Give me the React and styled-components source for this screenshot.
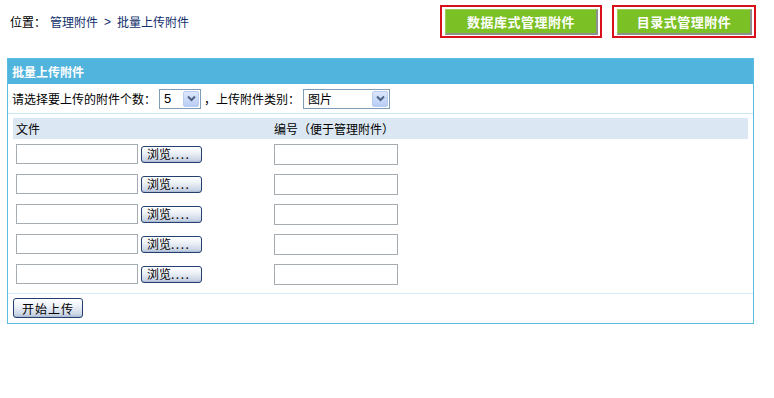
import React from "react";
import styled, { createGlobalStyle } from "styled-components";

const Global = createGlobalStyle`
  html, body { margin: 0; padding: 0; background: #fff; }
  body { font-family: "SimSun", "Noto Sans CJK SC", "Liberation Sans", sans-serif; font-size: 12px; color: #000; }
  * { box-sizing: border-box; }
`;

const Page = styled.div`
  width: 774px;
  height: 398px;
  background: #fff;
`;

const TopBar = styled.div`
  display: flex;
  align-items: center;
  justify-content: space-between;
  height: 38px;
  padding: 5px 18px 0 10px;
`;

const Crumb = styled.div`
  display: flex;
  align-items: center;
  font-size: 12px;
  line-height: 14px;
  color: #000;
  margin-top: 1px;
`;

const CrumbLabel = styled.span`
  margin-right: 4px;
`;

const CrumbLink = styled.a`
  color: #10306b;
  text-decoration: none;
`;

const CrumbSep = styled.span`
  color: #10306b;
  font-family: "Liberation Sans", sans-serif;
  padding: 0 6px 0 6px;
`;

const ActionGroup = styled.div`
  display: flex;
  gap: 10px;
`;

const RedFrame = styled.div`
  border: 2px solid #d7101a;
  padding: 2px 2px 1px 3px;
  width: ${(p) => p.$w}px;
  height: 33px;
  display: flex;
`;

const GreenButton = styled.button`
  flex: 1;
  background: #7bc024;
  border: 1px solid #9ccf5e;
  border-right: 2px solid #8f8f8f;
  border-bottom: 2px solid #8f8f8f;
  color: #fff;
  font-weight: bold;
  font-size: 13px;
  font-family: "Noto Sans CJK SC", sans-serif;
  letter-spacing: 0.5px;
  padding: 0;
  cursor: pointer;
`;

const Panel = styled.div`
  margin: 20px 0 0 7px;
  width: 747px;
  border: 1px solid #5bbbe0;
`;

const PanelHeader = styled.div`
  height: 25px;
  background: #51b4dd;
  color: #fff;
  font-weight: bold;
  font-size: 12px;
  line-height: 25px;
  padding-left: 4px;
  font-family: "Noto Sans CJK SC", sans-serif;
`;

const SelectRow = styled.div`
  display: flex;
  align-items: center;
  height: 30px;
  padding-left: 4px;
  border-bottom: 1px solid #c9e7f4;
  font-size: 12px;
`;

const FakeSelect = styled.div`
  display: flex;
  align-items: center;
  justify-content: space-between;
  width: ${(p) => p.$w}px;
  height: 20px;
  border: 1px solid #7f9db9;
  margin: 0 ${(p) => p.$mr || 0}px 0 ${(p) => p.$ml || 0}px;
  padding: 0 1px 0 4px;
  background: #fff;
  font-size: 13px;
  font-family: "Liberation Sans", "Noto Sans CJK SC", sans-serif;
`;

const SelectText = styled.span`
  font-family: "Noto Sans CJK SC", sans-serif;
  font-size: 12px;
`;

const ArrowBox = styled.span`
  width: 16px;
  height: 16px;
  border: 1px solid #b9cbf0;
  border-radius: 2px;
  background: linear-gradient(#dde7fb, #b8cdf5);
  display: flex;
  align-items: center;
  justify-content: center;
`;

const Table = styled.div`
  padding: 4px 5px 4px 5px;
  border-bottom: 1px solid #d4eef8;
`;

const Grid = styled.div`
  display: grid;
  grid-template-columns: 258px 1fr;
`;

const HeadCell = styled.div`
  background: #dbe8f4;
  height: 21px;
  line-height: 21px;
  padding-left: 3px;
  font-size: 12px;
`;

const Cell = styled.div`
  height: 30px;
  display: flex;
  align-items: center;
  padding-left: 3px;
  gap: 3px;
`;

const TextBox = styled.input`
  width: ${(p) => p.$w}px;
  height: ${(p) => p.$h}px;
  border: 1px solid #a5acb2;
  padding: 0 2px;
  margin: 0;
  background: #fff;
`;

const XPButton = styled.button`
  width: ${(p) => p.$w}px;
  height: ${(p) => p.$h}px;
  padding: 0 0 0 ${(p) => p.$pl || 0}px;
  margin: 0;
  border: 1px solid #24406e;
  border-radius: 3px;
  background: linear-gradient(#ffffff 0%, #edf1f7 40%, #ccd6e6 85%, #a9b8d1 100%);
  font-size: 12px;
  font-family: "Noto Sans CJK SC", sans-serif;
  color: #000;
  text-align: ${(p) => p.$align || "center"};
  line-height: ${(p) => p.$h - 3}px;
  letter-spacing: ${(p) => p.$ls || 0}px;
  cursor: pointer;
`;

const Dots = styled.span`
  letter-spacing: 1.5px;
`;

const Footer = styled.div`
  padding: 4px 5px 5px 5px;
  display: flex;
`;

const Chevron = () => (
  <svg width="9" height="7" viewBox="0 0 9 7">
    <path d="M1 1.5 L4.5 5 L8 1.5" fill="none" stroke="#4d6185" strokeWidth="2" />
  </svg>
);

export default function App() {
  const rows = [0, 1, 2, 3, 4];
  return (
    <Page>
      <Global />
      <TopBar>
        <Crumb>
          <CrumbLabel>位置：</CrumbLabel>
          <CrumbLink href="#">管理附件</CrumbLink>
          <CrumbSep>&gt;</CrumbSep>
          <CrumbLink href="#">批量上传附件</CrumbLink>
        </Crumb>
        <ActionGroup>
          <RedFrame $w={162}>
            <GreenButton>数据库式管理附件</GreenButton>
          </RedFrame>
          <RedFrame $w={144}>
            <GreenButton>目录式管理附件</GreenButton>
          </RedFrame>
        </ActionGroup>
      </TopBar>
      <Panel>
        <PanelHeader>批量上传附件</PanelHeader>
        <SelectRow>
          请选择要上传的附件个数：
          <FakeSelect $w={42} $ml={3} $mr={3}>
            5
            <ArrowBox>
              <Chevron />
            </ArrowBox>
          </FakeSelect>
          ，上传附件类别：
          <FakeSelect $w={87} $ml={3}>
            <SelectText>图片</SelectText>
            <ArrowBox>
              <Chevron />
            </ArrowBox>
          </FakeSelect>
        </SelectRow>
        <Table>
          <Grid>
            <HeadCell>文件</HeadCell>
            <HeadCell>编号（便于管理附件）</HeadCell>
            {rows.map((r) => (
              <React.Fragment key={r}>
                <Cell>
                  <TextBox $w={122} $h={20} />
                  <XPButton $w={61} $h={17} $align="left" $pl={5}>
                    浏览<Dots>....</Dots>
                  </XPButton>
                </Cell>
                <Cell>
                  <TextBox $w={124} $h={21} />
                </Cell>
              </React.Fragment>
            ))}
          </Grid>
        </Table>
        <Footer>
          <XPButton $w={70} $h={20} $ls={1}>
            开始上传
          </XPButton>
        </Footer>
      </Panel>
    </Page>
  );
}
